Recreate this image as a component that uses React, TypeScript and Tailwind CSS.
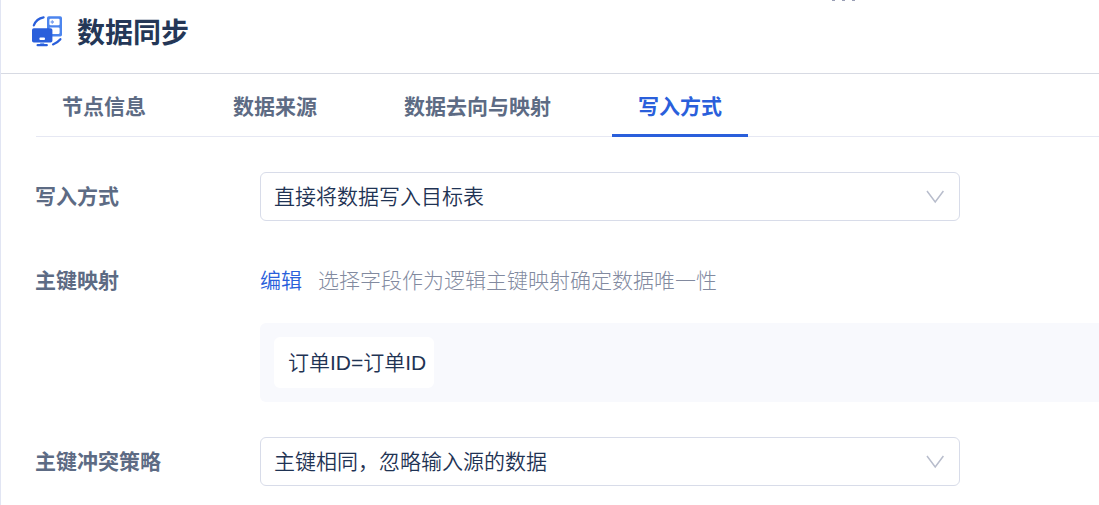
import type { ReactNode } from 'react';

const tabs = ['节点信息', '数据来源', '数据去向与映射', '写入方式'];
const activeTab = '写入方式';

function SyncIcon() {
	return (
		<svg className="size-8 shrink-0" viewBox="0 0 32 32" fill="none" aria-hidden="true">
			<rect x="16" y="1.2" width="15" height="20.4" rx="1.8" fill="#4c85ee" />
			<rect x="18.4" y="3.8" width="10.2" height="6.4" rx="1.2" fill="#fff" />
			<rect x="18.4" y="12.6" width="10.2" height="6.4" rx="1.2" fill="#fff" />
			<path d="M19.6 7h3.4M21.3 5.3v3.4" stroke="#7ba3f0" strokeWidth="1.3" />
			<rect x="1" y="13.3" width="20.4" height="14.2" rx="1.8" fill="#2a5fdb" />
			<rect x="8.4" y="22.6" width="5.6" height="2.4" rx="1" fill="#fff" />
			<path d="M11.2 27.5v2.6" stroke="#7ba3f0" strokeWidth="4" />
			<path d="M6.6 30.2h9.2" stroke="#2a5fdb" strokeWidth="2.2" strokeLinecap="round" />
			<path d="M2.8 10.4C4.4 6.2 8 3.2 12.6 2.4" stroke="#2a5fdb" strokeWidth="2.2" strokeLinecap="round" />
			<path d="M22 29.4C25 28.2 27.6 26.4 29.4 24.2" stroke="#2a5fdb" strokeWidth="2.2" strokeLinecap="round" />
		</svg>
	);
}

function Select({ id, value }: { id: string; value: string }) {
	return (
		<div className="relative w-full max-w-[700px]">
			<select
				id={id}
				defaultValue={value}
				className="h-[49px] w-full appearance-none rounded-md border border-[#d8dce9] bg-white pr-12 pb-1 pl-[13px] font-[350] text-[#1f3354]"
			>
				<option>{value}</option>
			</select>
			<svg
				className="pointer-events-none absolute top-[17px] right-4 h-4 w-[18px]"
				viewBox="0 0 18 16"
				fill="none"
				stroke="#b8bdcc"
				strokeWidth="1.5"
				aria-hidden="true"
			>
				<path d="M1 2 9.2 13 17.4 2" />
			</svg>
		</div>
	);
}

function Row({ label, htmlFor, children }: { label: string; htmlFor?: string; children: ReactNode }) {
	return (
		<div className="flex items-center">
			<label htmlFor={htmlFor} className="w-[225px] shrink-0 pb-1 font-bold text-[#5d6b84]">
				{label}
			</label>
			{children}
		</div>
	);
}

export default function App() {
	return (
		<main className="relative min-h-screen overflow-hidden border-l border-[#e1e5f3] bg-white font-['Noto_Sans_CJK_SC',sans-serif] text-[21px] leading-8">
			<div className="absolute top-0 right-[244px] flex h-px gap-[7px]" aria-hidden="true">
				<span className="w-[3px] bg-[#9a9fb5]" />
				<span className="w-[3px] bg-[#9a9fb5]" />
				<span className="w-[3px] bg-[#9a9fb5]" />
			</div>

			<header className="flex h-[74px] items-center gap-3.5 border-b border-[#d7dae3] pb-3 pl-[30px]">
				<SyncIcon />
				<h1 className="text-[28px] leading-10 font-bold text-[#243757]">数据同步</h1>
			</header>

			<nav className="ml-[35px] flex h-[63px] gap-[35px] border-b border-[#e6e8f3]" role="tablist">
				{tabs.map((tab) => (
					<button
						key={tab}
						type="button"
						role="tab"
						aria-selected={tab === activeTab}
						className={
							tab === activeTab
								? '-mb-px border-b-3 border-[#2a5fdb] px-[26px] pt-0.5 font-bold text-[#2a5fdb]'
								: '-mb-px border-b-3 border-transparent px-[26px] pt-0.5 font-bold text-[#5d6b84]'
						}
					>
						{tab}
					</button>
				))}
			</nav>

			<form className="flex flex-col gap-[35px] pt-[35px] pl-[34px]">
				<Row label="写入方式" htmlFor="write-mode">
					<Select id="write-mode" value="直接将数据写入目标表" />
				</Row>

				<div>
					<Row label="主键映射" htmlFor="edit-mapping">
						<div className="flex h-[49px] items-center gap-4 pb-1">
							<button id="edit-mapping" type="button" className="font-[350] text-[#2a5fdb]">
								编辑
							</button>
							<span className="font-light text-[#828a9f]">选择字段作为逻辑主键映射确定数据唯一性</span>
						</div>
					</Row>
					<div className="mt-[18px] ml-[225px] flex rounded-l-md bg-[#f8f9fd] p-3.5">
						<span className="flex h-[51px] items-center rounded-md bg-white pr-2 pl-3.5 font-['Liberation_Sans','Noto_Sans_CJK_SC',sans-serif] font-[350] text-[#1f3354]">
							订单ID=订单ID
						</span>
					</div>
				</div>

				<Row label="主键冲突策略" htmlFor="conflict-strategy">
					<Select id="conflict-strategy" value="主键相同，忽略输入源的数据" />
				</Row>
			</form>
		</main>
	);
}
